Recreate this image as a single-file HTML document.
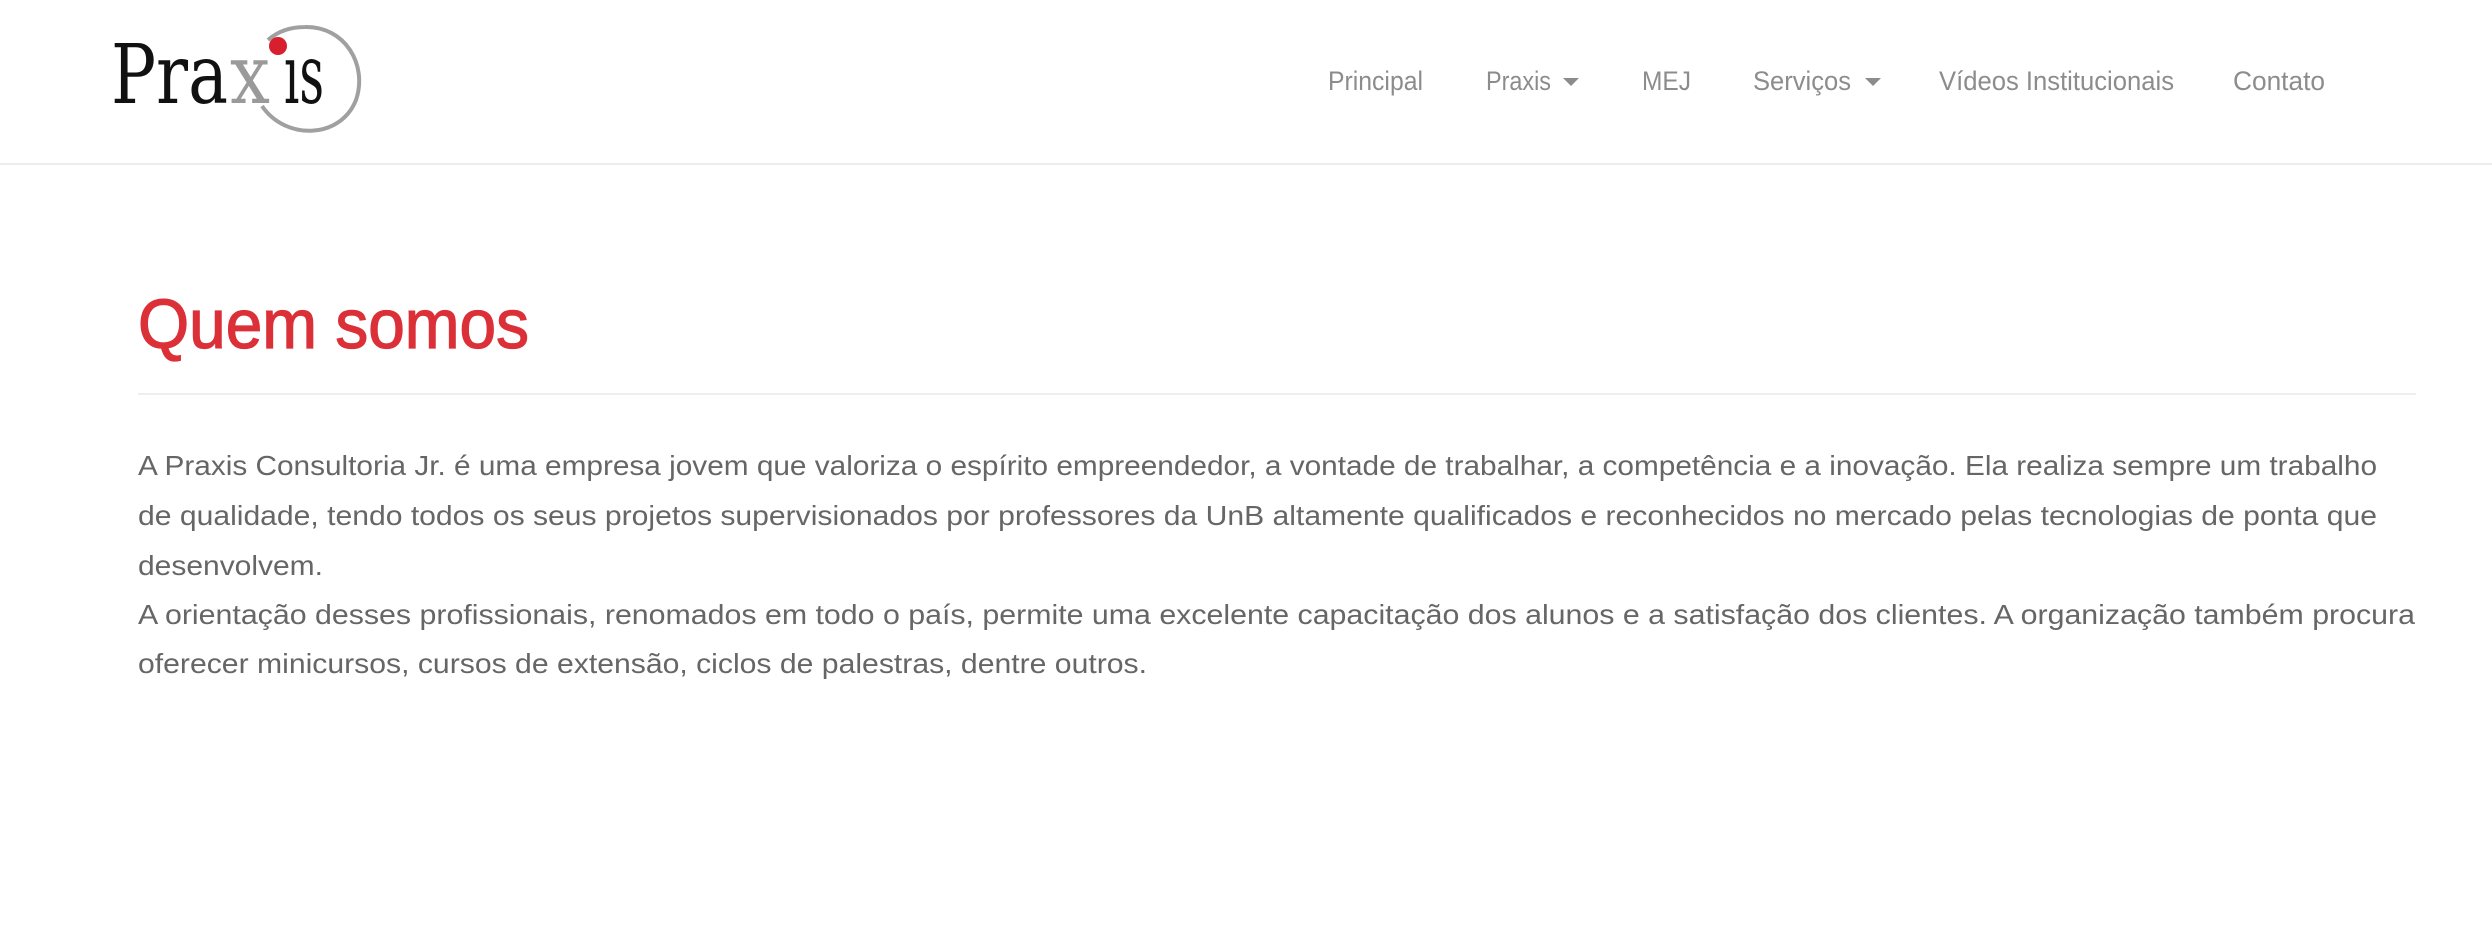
<!DOCTYPE html>
<html><head><meta charset="utf-8"><style>
html,body{margin:0;padding:0;background:#fff;width:2492px;height:944px;overflow:hidden}
svg{position:absolute;left:0;top:0}
</style></head><body>
<svg width="2492" height="944" xmlns="http://www.w3.org/2000/svg">
<rect x="0" y="163" width="2492" height="2" fill="#ececec"/>
<!-- logo -->
<path d="M262,106 C285,140 340,140 356,100 C368,65 345,26 305,27 C288,27 276,33 268,40" fill="none" stroke="#a0a0a0" stroke-width="4"/>
<text x="111" y="103" font-family="DejaVu Serif, serif" font-size="82" fill="#111" textLength="117" lengthAdjust="spacingAndGlyphs">Pra</text>
<text x="230" y="103" font-family="DejaVu Serif, serif" font-size="82" fill="#9a9a9a" textLength="40" lengthAdjust="spacingAndGlyphs">x</text>
<text x="284" y="103" font-family="DejaVu Serif, serif" font-size="82" fill="#111" textLength="40" lengthAdjust="spacingAndGlyphs">ıs</text>
<circle cx="278" cy="46" r="9" fill="#d81f2e"/>
<!-- nav -->
<g font-family="Liberation Sans, sans-serif" font-size="27" fill="#8c8c8c">
<text x="1328" y="90" textLength="95" lengthAdjust="spacingAndGlyphs">Principal</text>
<text x="1486" y="90" textLength="65" lengthAdjust="spacingAndGlyphs">Praxis</text>
<text x="1642" y="90" textLength="49" lengthAdjust="spacingAndGlyphs">MEJ</text>
<text x="1753" y="90" textLength="98" lengthAdjust="spacingAndGlyphs">Serviços</text>
<text x="1939" y="90" textLength="235" lengthAdjust="spacingAndGlyphs">Vídeos Institucionais</text>
<text x="2233" y="90" textLength="92" lengthAdjust="spacingAndGlyphs">Contato</text>
</g>
<polygon points="1563,78 1579,78 1571,86" fill="#8c8c8c"/>
<polygon points="1865,78 1881,78 1873,86" fill="#8c8c8c"/>
<!-- heading -->
<text x="138" y="348" font-family="Liberation Sans, sans-serif" font-size="70" fill="#dc3039" stroke="#dc3039" stroke-width="1.3" textLength="391" lengthAdjust="spacingAndGlyphs">Quem somos</text>
<rect x="138" y="393" width="2278" height="2" fill="#eeeeee"/>
<g font-family="Liberation Sans, sans-serif" font-size="28" fill="#666">
<text x="138" y="475" textLength="2239" lengthAdjust="spacingAndGlyphs">A Praxis Consultoria Jr. é uma empresa jovem que valoriza o espírito empreendedor, a vontade de trabalhar, a competência e a inovação. Ela realiza sempre um trabalho</text>
<text x="138" y="525" textLength="2239" lengthAdjust="spacingAndGlyphs">de qualidade, tendo todos os seus projetos supervisionados por professores da UnB altamente qualificados e reconhecidos no mercado pelas tecnologias de ponta que</text>
<text x="138" y="575" textLength="185" lengthAdjust="spacingAndGlyphs">desenvolvem.</text>
<text x="138" y="624" textLength="2277" lengthAdjust="spacingAndGlyphs">A orientação desses profissionais, renomados em todo o país, permite uma excelente capacitação dos alunos e a satisfação dos clientes. A organização também procura</text>
<text x="138" y="673" textLength="1009" lengthAdjust="spacingAndGlyphs">oferecer minicursos, cursos de extensão, ciclos de palestras, dentre outros.</text>
</g>
</svg>
</body></html>
